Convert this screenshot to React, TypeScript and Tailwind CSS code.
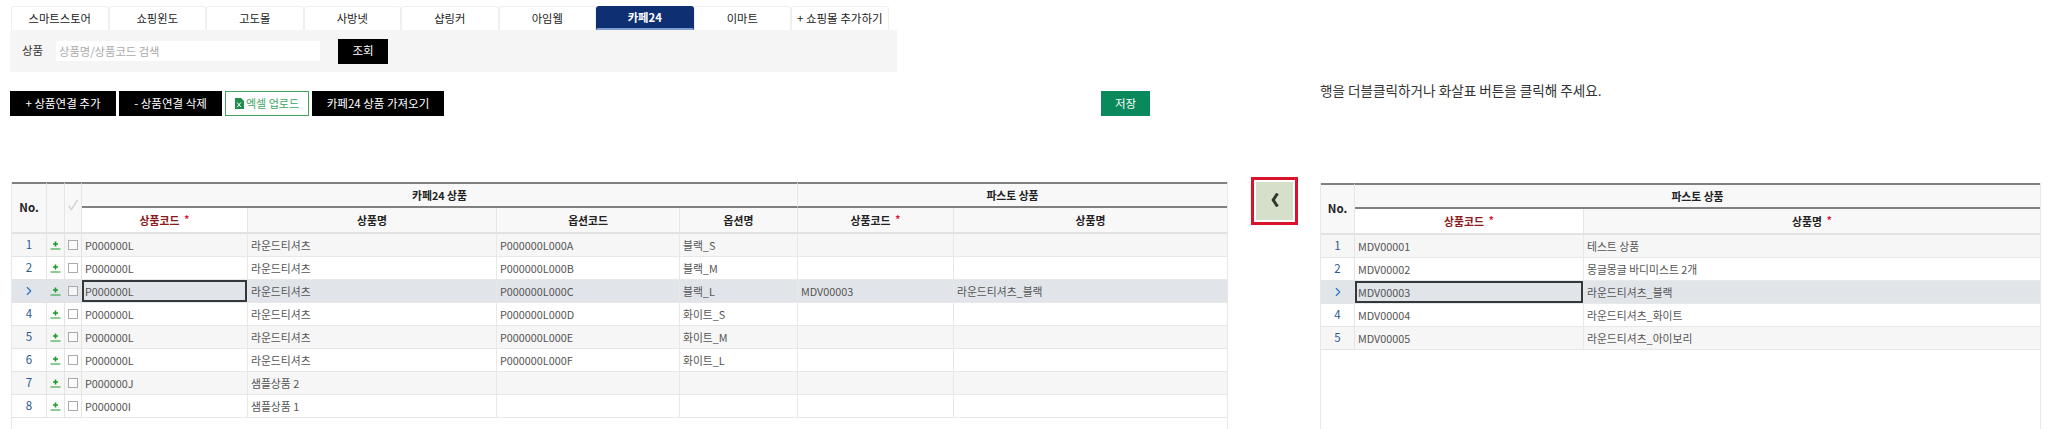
import { ChevronRight } from "lucide-react";

const tabs = ["스마트스토어", "쇼핑윈도", "고도몰", "사방넷", "샵링커", "아임웹", "카페24", "이마트", "+ 쇼핑몰 추가하기"];

const leftRows = [
  ["P000000L", "라운드티셔츠", "P000000L000A", "블랙_S", "", ""],
  ["P000000L", "라운드티셔츠", "P000000L000B", "블랙_M", "", ""],
  ["P000000L", "라운드티셔츠", "P000000L000C", "블랙_L", "MDV00003", "라운드티셔츠_블랙"],
  ["P000000L", "라운드티셔츠", "P000000L000D", "화이트_S", "", ""],
  ["P000000L", "라운드티셔츠", "P000000L000E", "화이트_M", "", ""],
  ["P000000L", "라운드티셔츠", "P000000L000F", "화이트_L", "", ""],
  ["P000000J", "샘플상품 2", "", "", "", ""],
  ["P000000I", "샘플상품 1", "", "", "", ""],
];

const rightRows = [
  ["MDV00001", "테스트 상품"],
  ["MDV00002", "몽글몽글 바디미스트 2개"],
  ["MDV00003", "라운드티셔츠_블랙"],
  ["MDV00004", "라운드티셔츠_화이트"],
  ["MDV00005", "라운드티셔츠_아이보리"],
];

const SELECTED = 2;

const thGroup = "h-[26px] border-t-2 border-b-2 border-r border-t-[#808080] border-b-[#808080] border-r-[#e6e6e6] bg-[#f8f8f8] text-center font-bold text-[10.8px] text-[#222]";
const thSpan = "border-t-2 border-b-2 border-r border-t-[#808080] border-b-[#e2e2e2] border-r-[#e6e6e6] bg-[#f8f8f8] text-center";
const thCol = "h-[26px] border-b-2 border-r border-b-[#e2e2e2] border-r-[#e6e6e6] bg-[#f8f8f8] text-center font-bold text-[10.8px] text-[#222]";
const thRed = "h-[26px] border-b-2 border-r border-b-[#e2e2e2] border-r-[#e6e6e6] bg-white text-center font-bold text-[10.8px] text-[#8b1a1a]";

function rowBg(i: number) {
  if (i === SELECTED) return "bg-[#e1e5ea]";
  return i % 2 === 0 ? "bg-[#f6f6f6]" : "bg-white";
}

const Star = () => <span className="ml-[5px] align-[2px] text-[10px] font-bold leading-none text-[#e0142c]">*</span>;

const RowNo = ({ i }: { i: number }) => (
  <td className="border-r border-b border-[#e4e4e4] text-center text-[11.5px] text-[#2a5d92]">
    {i === SELECTED ? <ChevronRight size={14} strokeWidth={2} className="mx-auto text-[#2f74c0]" /> : i + 1}
  </td>
);

const Cell = ({ text, focus }: { text: string; focus?: boolean }) => (
  <td
    className={
      "h-[23px] border-r border-b border-[#e8e8e8] pl-[3px] text-[10.8px] text-[#555] " +
      (focus ? "shadow-[inset_0_0_0_2px_#33383c]" : "")
    }
  >
    {text}
  </td>
);

const PlusIcon = () => (
  <svg width="11" height="9" viewBox="0 0 11 9" className="mx-auto">
    <path d="M5.5 0.5v5M3 3h5" stroke="#1e9a2a" strokeWidth="1.6" />
    <path d="M0.5 8h10" stroke="#1e9a2a" strokeWidth="1" />
  </svg>
);

const CheckBox = () => <span className="mx-auto block h-[10px] w-[10px] border border-[#aaa] bg-white/60" />;

const HeadCheck = () => (
  <svg width="12" height="12" viewBox="0 0 12 12" className="mx-auto mb-[6px]">
    <path d="M1.5 7l3 3.5L10.5 1" fill="none" stroke="#d4d4d4" strokeWidth="1.5" />
  </svg>
);

const ExcelIcon = () => (
  <svg width="9" height="11" viewBox="0 0 9 11">
    <path d="M0 0h6l3 3v8H0z" fill="#1f8f4e" />
    <path d="M2.2 4.5l3.6 4.5M5.8 4.5L2.2 9" stroke="#fff" strokeWidth="1" />
  </svg>
);

const BlackButton = ({ label, width }: { label: string; width: string }) => (
  <button className={"flex h-[25px] items-center justify-center bg-black text-[11.5px] text-white " + width}>{label}</button>
);

const App = () => {
  return (
    <div className="flex h-[429px] w-[2048px] overflow-hidden bg-white font-['Noto_Sans_CJK_KR','Noto_Sans',sans-serif]">
      {/* left side */}
      <div className="ml-[10px] w-[1218px] shrink-0">
        <div className="ml-px mt-[6px] flex h-[24px]">
          {tabs.map((t, i) => (
            <div
              key={t}
              className={
                "flex w-[97.5px] shrink-0 items-center justify-center rounded-t-[3px] border border-b-0 text-[11.3px] " +
                (i === 6
                  ? "border-[#0f2f73] border-b-2 border-b-[#7f9fd0] bg-[#0f2f73] font-bold text-white"
                  : "border-[#efefef] bg-white text-[#222]")
              }
            >
              {i === 8 ? <span className="text-[11.5px] whitespace-nowrap">{t}</span> : t}
            </div>
          ))}
        </div>
        <div className="flex h-[42px] w-[887px] items-center bg-[#f5f5f5]">
          <span className="ml-[12px] w-[34px] text-[11.5px] text-[#333]">상품</span>
          <input
            placeholder="상품명/상품코드 검색"
            className="h-[20px] w-[264px] bg-white px-[3px] text-[11.3px] outline-none placeholder:text-[#aaa]"
          />
          <button className="ml-[18px] flex h-[25px] w-[50px] items-center justify-center bg-black text-[11.5px] text-white">조회</button>
        </div>

        <div className="mt-[19px] flex h-[25px] items-center">
          <BlackButton label="+ 상품연결 추가" width="w-[106px]" />
          <div className="ml-[3px]">
            <BlackButton label="- 상품연결 삭제" width="w-[103px]" />
          </div>
          <button className="ml-[3px] flex h-[25px] w-[84px] items-center justify-center gap-[2px] border border-[#3ea661] bg-white text-[11px] text-[#3ea661]">
            <ExcelIcon />
            엑셀 업로드
          </button>
          <div className="ml-[3px]">
            <BlackButton label="카페24 상품 가져오기" width="w-[132px]" />
          </div>
          <button className="ml-[657px] flex h-[25px] w-[49px] items-center justify-center bg-[#0a8a5c] text-[11.5px] text-white">저장</button>
        </div>

        <div className="ml-px mt-[66px] h-[247px] w-[1217px] overflow-hidden border-r border-l border-[#e8e8e8]">
          <table className="w-[1216px] table-fixed border-separate border-spacing-0">
            <colgroup>
              <col className="w-[35px]" />
              <col className="w-[18px]" />
              <col className="w-[17px]" />
              <col className="w-[166px]" />
              <col className="w-[249px]" />
              <col className="w-[183px]" />
              <col className="w-[118px]" />
              <col className="w-[156px]" />
              <col className="w-[274px]" />
            </colgroup>
            <thead>
              <tr>
                <th rowSpan={2} className={thSpan + " text-[11.5px] font-bold text-[#222]"}>No.</th>
                <th rowSpan={2} className={thSpan}></th>
                <th rowSpan={2} className={thSpan}><HeadCheck /></th>
                <th colSpan={4} className={thGroup}>카페24 상품</th>
                <th colSpan={2} className={thGroup}>파스토 상품</th>
              </tr>
              <tr>
                <th className={thRed}>상품코드<Star /></th>
                <th className={thCol}>상품명</th>
                <th className={thCol}>옵션코드</th>
                <th className={thCol}>옵션명</th>
                <th className={thCol}>상품코드<Star /></th>
                <th className={thCol}>상품명</th>
              </tr>
            </thead>
            <tbody>
              {leftRows.map((r, i) => (
                <tr key={i} className={rowBg(i)}>
                  <RowNo i={i} />
                  <td className="border-r border-b border-[#e4e4e4]"><PlusIcon /></td>
                  <td className="border-r border-b border-[#e4e4e4]"><CheckBox /></td>
                  {r.map((c, j) => (
                    <Cell key={j} text={c} focus={i === SELECTED && j === 0} />
                  ))}
                </tr>
              ))}
            </tbody>
          </table>
        </div>
      </div>

      {/* arrow */}
      <div className="ml-[23px] mt-[177px] shrink-0">
        <button className="flex h-[48px] w-[47px] items-center justify-center border-[3px] border-[#d9142a] bg-white p-[2px]">
          <span className="flex h-full w-full items-center justify-center bg-[#d5dfc9]">
            <svg width="8" height="14" viewBox="0 0 8 14" className="mb-[2px]">
              <path d="M6.5 0.5L2.2 7l4.3 6.5" fill="none" stroke="#2b3a2b" strokeWidth="3" />
            </svg>
          </span>
        </button>
      </div>

      {/* right side */}
      <div className="ml-[22px] w-[721px] shrink-0">
        <p className="mt-[81px] h-[18px] text-[13.6px] leading-[18px] text-[#333]">행을 더블클릭하거나 화살표 버튼을 클릭해 주세요.</p>
        <div className="mt-[84px] h-[247px] w-[721px] overflow-hidden border-r border-l border-[#e8e8e8]">
          <table className="w-[720px] table-fixed border-separate border-spacing-0">
            <colgroup>
              <col className="w-[34px]" />
              <col className="w-[229px]" />
              <col className="w-[457px]" />
            </colgroup>
            <thead>
              <tr>
                <th rowSpan={2} className={thSpan + " text-[11.5px] font-bold text-[#222]"}>No.</th>
                <th colSpan={2} className={thGroup}>파스토 상품</th>
              </tr>
              <tr>
                <th className={thRed}>상품코드<Star /></th>
                <th className={thCol}>상품명<Star /></th>
              </tr>
            </thead>
            <tbody>
              {rightRows.map((r, i) => (
                <tr key={i} className={rowBg(i)}>
                  <RowNo i={i} />
                  {r.map((c, j) => (
                    <Cell key={j} text={c} focus={i === SELECTED && j === 0} />
                  ))}
                </tr>
              ))}
            </tbody>
          </table>
        </div>
      </div>
    </div>
  );
};

export default App;
